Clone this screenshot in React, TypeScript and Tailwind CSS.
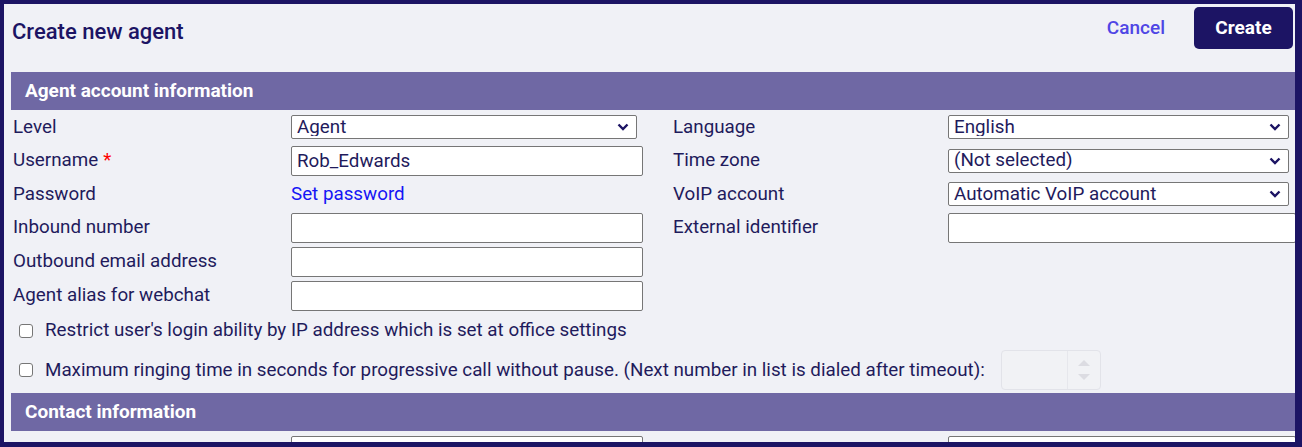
import React from "react";

const ink = "text-[#1f1b5c]";

function Chevron() {
  return (
    <svg
      className="pointer-events-none absolute right-[8px] top-1/2 -translate-y-1/2"
      width="12"
      height="8"
      viewBox="0 0 12 8"
      fill="none"
    >
      <path d="M1.5 1.5 6 6l4.5-4.5" stroke="#1c1464" strokeWidth="2.4" />
    </svg>
  );
}

function Select({ value, width }: { value: string; width: string }) {
  return (
    <div className={`relative h-[24px] ${width}`}>
      <select
        defaultValue={value}
        className={`h-full w-full appearance-none rounded-[2px] border border-[#767676] bg-white pl-[5px] text-[18.8px] leading-none ${ink} outline-none`}
      >
        <option>{value}</option>
      </select>
      <Chevron />
    </div>
  );
}

function TextInput({ value = "", width = "w-[352px]" }: { value?: string; width?: string }) {
  return (
    <input
      defaultValue={value}
      className={`h-[30px] ${width} shrink-0 rounded-[2px] border border-[#767676] bg-white pl-[5px] text-[18.8px] ${ink} outline-none`}
    />
  );
}

function Checkbox() {
  return (
    <input
      type="checkbox"
      className="m-0 ml-[8px] h-[14px] w-[14px] shrink-0 appearance-none rounded-[3px] border border-[#767676] bg-white"
    />
  );
}

function SectionHeader({ title }: { title: string }) {
  return (
    <div className="flex h-[38px] items-center bg-[#6f68a4] pl-[14px] text-[19px] font-bold text-white">
      {title}
    </div>
  );
}

const rows: {
  h: string;
  left: string;
  required?: boolean;
  leftField: React.ReactNode;
  right?: string;
  rightField?: React.ReactNode;
}[] = [
  {
    h: "h-[34px]",
    left: "Level",
    leftField: <Select value="Agent" width="w-[346px]" />,
    right: "Language",
    rightField: <Select value="English" width="w-[341px]" />,
  },
  {
    h: "h-[33px]",
    left: "Username",
    required: true,
    leftField: <TextInput value="Rob_Edwards" />,
    right: "Time zone",
    rightField: <Select value="(Not selected)" width="w-[341px]" />,
  },
  {
    h: "h-[34px]",
    left: "Password",
    leftField: <a className="text-[18.8px] text-[#1515f5]">Set password</a>,
    right: "VoIP account",
    rightField: <Select value="Automatic VoIP account" width="w-[341px]" />,
  },
  {
    h: "h-[33px]",
    left: "Inbound number",
    leftField: <TextInput />,
    right: "External identifier",
    rightField: <TextInput width="w-[348px]" />,
  },
  { h: "h-[35px]", left: "Outbound email address", leftField: <TextInput /> },
  { h: "h-[33px]", left: "Agent alias for webchat", leftField: <TextInput /> },
];

export default function App() {
  return (
    <div className="h-[447px] w-[1302px] overflow-hidden border-b-[5px] border-l-4 border-r-[7px] border-t-4 border-[#1c1464] bg-[#f0f1f6] font-['Roboto',sans-serif]">
      <div className="pl-[7px]">
        <header className="flex h-[68px] items-start justify-between">
          <h1 className="mt-[11px] pl-[1px] text-[22px] font-medium text-[#1c1464]">
            Create new agent
          </h1>
          <div className="mr-[2px] mt-[3px] flex items-center gap-[29px]">
            <button className="text-[19px] font-medium text-[#4f46e5]">Cancel</button>
            <button className="h-[42px] w-[99px] rounded-[5px] bg-[#1c1464] text-[19px] font-bold text-white">
              Create
            </button>
          </div>
        </header>

        <SectionHeader title="Agent account information" />

        <div>
          {rows.map((r) => (
            <div
              key={r.left}
              className={`grid ${r.h} grid-cols-[280px_382px_275px_1fr] items-center`}
            >
              <span className={`pl-[2px] text-[18.8px] ${ink}`}>
                {r.left}
                {r.required && <span className="ml-[5px] text-[#ff0000]">*</span>}
              </span>
              <div className="flex">{r.leftField}</div>
              {r.right ? <span className={`text-[18.8px] ${ink}`}>{r.right}</span> : <span />}
              <div className="flex">{r.rightField}</div>
            </div>
          ))}
        </div>

        <label className="flex h-[37px] items-center">
          <Checkbox />
          <span className={`ml-[12px] text-[18.8px] ${ink}`}>
            Restrict user's login ability by IP address which is set at office settings
          </span>
        </label>

        <div className="flex h-[42px] items-center">
          <Checkbox />
          <span className={`ml-[12px] text-[18.8px] ${ink}`}>
            Maximum ringing time in seconds for progressive call without pause. (Next number in list
            is dialed after timeout):
          </span>
          <div className="ml-[16px] flex h-[40px] w-[100px] rounded-[4px] border border-[#e2e3e9] bg-[#f1f2f5]">
            <div className="flex-1" />
            <div className="flex w-[33px] flex-col items-center justify-center gap-[8px] border-l border-[#e6e7ec]">
              <svg width="12" height="6" viewBox="0 0 12 6">
                <path d="M0 6 6 0l6 6Z" fill="#dcdce2" />
              </svg>
              <svg width="12" height="6" viewBox="0 0 12 6">
                <path d="M0 0h12L6 6Z" fill="#dcdce2" />
              </svg>
            </div>
          </div>
        </div>

        <div className="mt-[2px]">
          <SectionHeader title="Contact information" />
        </div>

        <div className="mt-[5px] grid grid-cols-[280px_382px_275px_1fr]">
          <span />
          <div className="flex">
            <TextInput />
          </div>
          <span />
          <div className="flex">
            <TextInput width="w-[348px]" />
          </div>
        </div>
      </div>
    </div>
  );
}
